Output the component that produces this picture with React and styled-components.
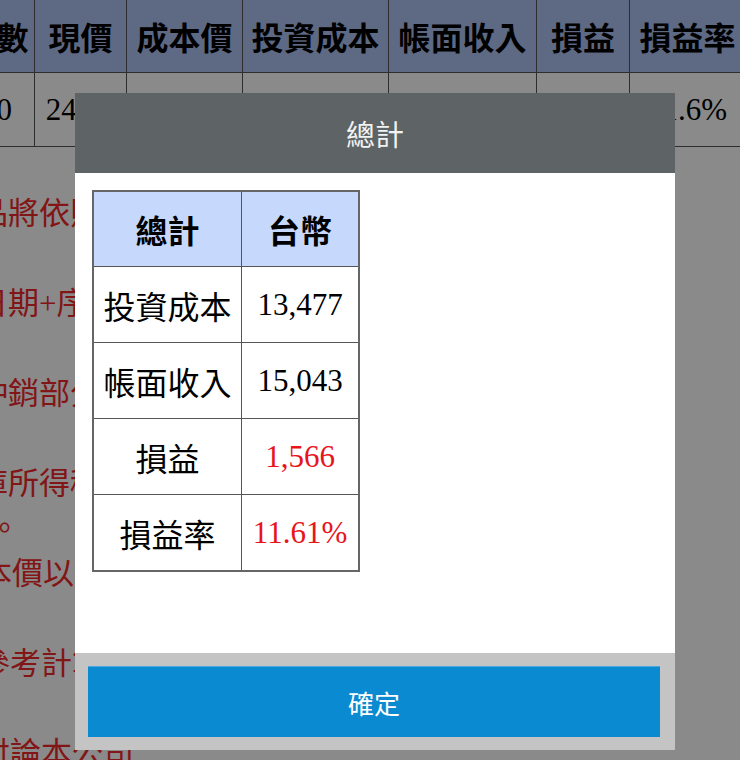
import styled, { createGlobalStyle } from 'styled-components';

const GlobalStyle = createGlobalStyle`
  html, body {
    margin: 0;
    padding: 0;
    background: #fff;
    overflow: hidden;
  }
  body {
    width: 740px;
    height: 760px;
    font-family: 'Liberation Serif', 'Noto Sans CJK TC', serif;
  }
`;

const Page = styled.div`
  width: 740px;
  height: 760px;
  overflow: hidden;
  position: relative;
`;

const Scroller = styled.div`
  margin-left: -42px;
  width: 830px;
`;

const StockTable = styled.table`
  border-collapse: collapse;
  table-layout: fixed;
  font-size: 31px;
`;

const HeadCell = styled.th`
  height: 72px;
  padding: 0;
  background: #aec2f4;
  border: 1px solid #555;
  border-top: none;
  font-family: 'Noto Sans CJK TC', sans-serif;
  font-size: 32px;
  font-weight: 700;
  text-align: center;
  color: #000;
`;

const DataCell = styled.td`
  height: 73px;
  padding: 0;
  background: #fff;
  border: 1px solid #555;
  text-align: center;
  color: #000;
`;

const Notes = styled.div`
  margin-top: 44px;
  padding-left: 19px;
  font-size: 31px;
  line-height: 45px;
  color: #f02a2a;
  white-space: nowrap;
`;

const NoteLine = styled.div`
  margin-top: ${p => p.$skip * 45}px;
  margin-left: ${p => p.$indent || 0}px;
`;

const Dim = styled.div`
  position: absolute;
  inset: 0;
  background: rgba(0, 0, 0, 0.46);
`;

const Modal = styled.div`
  position: absolute;
  left: 75px;
  top: 93px;
  width: 600px;
  height: 657px;
  display: flex;
  flex-direction: column;
`;

const ModalHeader = styled.div`
  height: 80px;
  background: #5e6365;
  color: #f2f2f2;
  display: flex;
  align-items: center;
  justify-content: center;
  font-family: 'Noto Sans CJK TC', sans-serif;
  font-size: 29px;
`;

const ModalBody = styled.div`
  flex: 1;
  background: #fff;
  padding: 17px;
`;

const SumTable = styled.table`
  border-collapse: collapse;
  table-layout: fixed;
  border: 2px solid #666;
  font-size: 31px;
`;

const SumHead = styled.th`
  width: ${p => p.$w}px;
  height: 74px;
  padding: 0;
  background: #c6d8fb;
  border: 1px solid #555;
  font-family: 'Noto Sans CJK TC', sans-serif;
  font-size: 32px;
  font-weight: 700;
  color: #000;
`;

const SumLabel = styled.td`
  height: 75px;
  padding: 0;
  border: 1px solid #555;
  text-align: center;
  font-family: 'Noto Sans CJK TC', sans-serif;
  font-size: 32px;
  color: #000;
`;

const SumValue = styled.td`
  padding: 0;
  border: 1px solid #555;
  text-align: center;
  color: ${p => (p.$loss ? '#e8141c' : '#000')};
`;

const ModalFooter = styled.div`
  background: #c4c4c4;
  padding: 13px 15px 13px 13px;
`;

const ConfirmButton = styled.button`
  display: block;
  width: 100%;
  height: 71px;
  border: none;
  border-top: 1px solid #4aa8de;
  background: #0a8ad0;
  color: #fff;
  font-family: 'Noto Sans CJK TC', sans-serif;
  font-size: 26px;
  cursor: pointer;
`;

const columns = [
  { title: '股數', width: 76, value: '50' },
  { title: '現價', width: 92, value: '24.85' },
  { title: '成本價', width: 116, value: '22.10' },
  { title: '投資成本', width: 146, value: '13,477' },
  { title: '帳面收入', width: 148, value: '15,043' },
  { title: '損益', width: 93, value: '1,566' },
  { title: '損益率', width: 116, value: '11.6%' },
];

const notes = [
  { text: '品將依照', skip: 0, indent: 0 },
  { text: '日期+序號', skip: 1, indent: 0 },
  { text: '沖銷部分', skip: 1, indent: 0 },
  { text: '庫所得稅', skip: 1, indent: 0 },
  { text: '。', skip: 0, indent: 12 },
  { text: '本價以成', skip: 0, indent: 4 },
  { text: '參考計算', skip: 1, indent: 2 },
  { text: '討論本公司', skip: 1, indent: 2 },
];

const summary = [
  { label: '投資成本', value: '13,477' },
  { label: '帳面收入', value: '15,043' },
  { label: '損益', value: '1,566', loss: true },
  { label: '損益率', value: '11.61%', loss: true },
];

const App = () => {
  return (
    <Page>
      <GlobalStyle />
      <Scroller>
        <StockTable>
          <colgroup>
            {columns.map(c => (
              <col key={c.title} style={{ width: c.width }} />
            ))}
          </colgroup>
          <thead>
            <tr>
              {columns.map(c => (
                <HeadCell key={c.title}>{c.title}</HeadCell>
              ))}
            </tr>
          </thead>
          <tbody>
            <tr>
              {columns.map(c => (
                <DataCell key={c.title}>{c.value}</DataCell>
              ))}
            </tr>
          </tbody>
        </StockTable>
        <Notes>
          {notes.map((n, i) => (
            <NoteLine key={i} $skip={n.skip} $indent={n.indent}>
              {n.text}
            </NoteLine>
          ))}
        </Notes>
      </Scroller>
      <Dim />
      <Modal>
        <ModalHeader>總計</ModalHeader>
        <ModalBody>
          <SumTable>
            <thead>
              <tr>
                <SumHead $w={147}>總計</SumHead>
                <SumHead $w={116}>台幣</SumHead>
              </tr>
            </thead>
            <tbody>
              {summary.map(row => (
                <tr key={row.label}>
                  <SumLabel>{row.label}</SumLabel>
                  <SumValue $loss={row.loss}>{row.value}</SumValue>
                </tr>
              ))}
            </tbody>
          </SumTable>
        </ModalBody>
        <ModalFooter>
          <ConfirmButton type="button">確定</ConfirmButton>
        </ModalFooter>
      </Modal>
    </Page>
  );
};

export default App;
